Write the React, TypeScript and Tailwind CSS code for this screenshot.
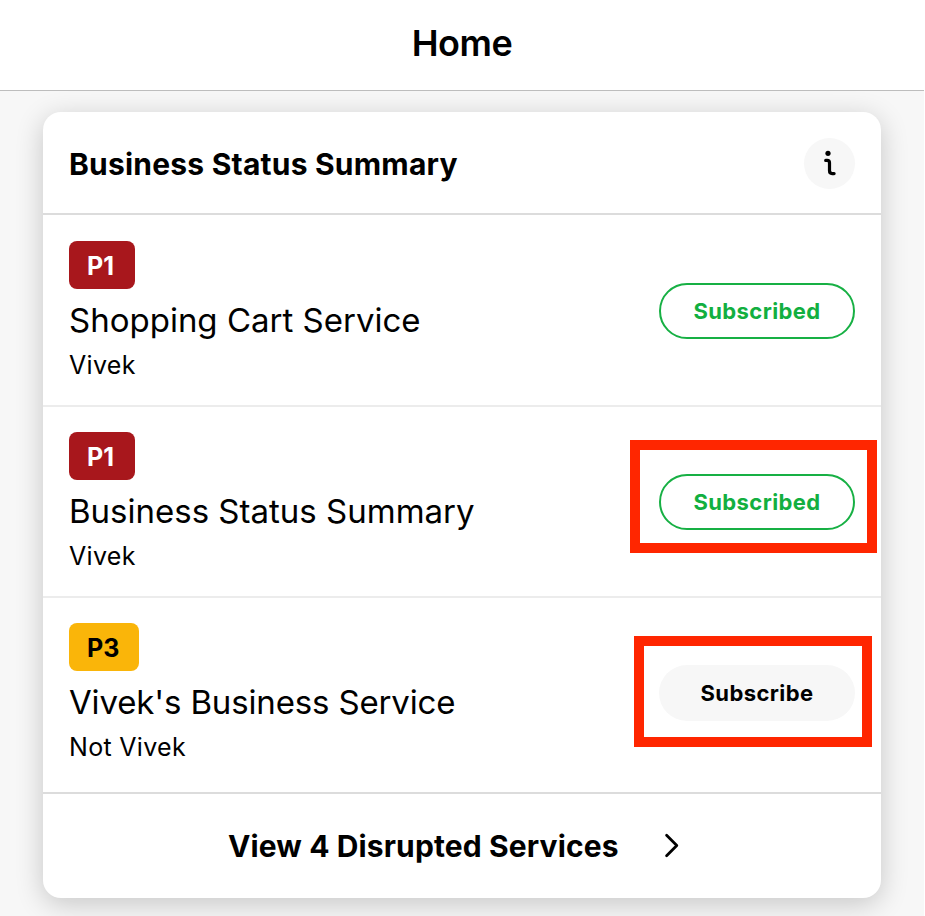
import { clsx } from "clsx";

type Service = {
  name: string;
  owner: string;
  priority: "P1" | "P3";
  subscribed: boolean;
  highlight?: string;
};

const services: Service[] = [
  {
    name: "Shopping Cart Service",
    owner: "Vivek",
    priority: "P1",
    subscribed: true,
  },
  {
    name: "Business Status Summary",
    owner: "Vivek",
    priority: "P1",
    subscribed: true,
    highlight: "-left-[29px] -top-[34px] w-[247px] h-[113px]",
  },
  {
    name: "Vivek's Business Service",
    owner: "Not Vivek",
    priority: "P3",
    subscribed: false,
    highlight: "-left-[25px] -top-[29px] w-[238px] h-[111px]",
  },
];

function InfoButton() {
  return (
    <button
      aria-label="Info"
      className="flex h-[51px] w-[51px] items-center justify-center rounded-full bg-[#f7f7f7]"
    >
      <svg width="51" height="51" viewBox="0 0 51 51" fill="none">
        <circle cx="24" cy="15.3" r="2.6" fill="black" />
        <path
          d="M21.7 22.4h1.4c1.6 0 2.4.8 2.4 2.4v7.8c0 2.2.9 3 2.6 3h2"
          stroke="black"
          strokeWidth="3.2"
          strokeLinecap="round"
        />
      </svg>
    </button>
  );
}

function PriorityBadge({ priority }: { priority: Service["priority"] }) {
  return (
    <span
      className={clsx(
        "flex h-[48px] items-center rounded-[8px] pl-[18px] pt-[3px] text-[25px] font-bold",
        priority === "P1"
          ? "w-[66px] bg-[#a8171c] text-white"
          : "w-[70px] bg-[#fab509] text-black"
      )}
    >
      {priority}
    </span>
  );
}

function ServiceRow({ service }: { service: Service }) {
  return (
    <li className="flex h-[191px] items-start justify-between border-b-2 border-[#ececec] px-[26px] first:h-[192px] first:pt-px last:h-[194px] last:border-b-0">
      <div className="flex flex-col items-start pt-[25px]">
        <PriorityBadge priority={service.priority} />
        <p
          className={clsx(
            "mt-[10px] text-[33px] leading-[42px]",
            service.priority === "P3" && "tracking-[-0.15px]"
          )}
        >
          {service.name}
        </p>
        <p className="mt-[8px] text-[25px] leading-[32px] tracking-[0.3px]">
          {service.owner}
        </p>
      </div>
      <div className="relative mt-[67px]">
        <button
          className={clsx(
            "h-[56px] w-[196px] rounded-full pt-px text-[22px] font-bold tracking-[0.4px]",
            service.subscribed
              ? "border-2 border-[#17b044] bg-white text-[#12af40]"
              : "bg-[#f7f7f7] text-black"
          )}
        >
          {service.subscribed ? "Subscribed" : "Subscribe"}
        </button>
        {service.highlight && (
          <div
            className={clsx(
              "pointer-events-none absolute border-[10px] border-[#ff2600]",
              service.highlight
            )}
          />
        )}
      </div>
    </li>
  );
}

export default function App() {
  return (
    <div className="h-[916px] w-full overflow-hidden bg-white font-['Inter',sans-serif] text-black">
      <div className="flex h-full w-[924px] flex-col overflow-hidden bg-[#f7f7f7]">
        <header className="flex h-[91px] shrink-0 items-center justify-center border-b border-[#bdbdbd] bg-white pb-[5px]">
          <h1 className="text-[36px] font-semibold tracking-[-0.5px]">Home</h1>
        </header>

        <section className="mx-[43px] mt-[21px] h-[786px] shrink-0 rounded-[18px] bg-white shadow-[0_6px_28px_rgba(0,0,0,0.2)]">
          <div className="flex h-[103px] items-center justify-between border-b-2 border-[#dcdcdc] px-[26px] pt-[2px]">
            <h2 className="pt-[2px] text-[30px] font-bold tracking-[0.22px]">
              Business Status Summary
            </h2>
            <InfoButton />
          </div>

          <ul>
            {services.map((service) => (
              <ServiceRow key={service.name} service={service} />
            ))}
          </ul>

          <button className="flex h-[106px] w-full items-center border-t-2 border-[#dcdcdc] pl-[185px] text-[30px] font-bold tracking-[0.12px]">
            <span className="w-[436px] text-left">
              View 4 Disrupted Services
            </span>
            <svg width="16" height="26" viewBox="0 0 16 26" fill="none">
              <path
                d="M2.6 2.3l10.2 10.2L2.6 22.7"
                stroke="black"
                strokeWidth="2.8"
                strokeLinecap="round"
                strokeLinejoin="round"
              />
            </svg>
          </button>
        </section>
      </div>
    </div>
  );
}
